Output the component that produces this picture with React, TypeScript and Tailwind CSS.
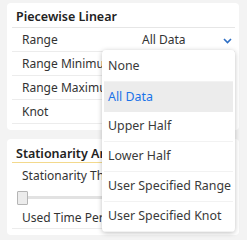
import React from 'react';

const font = { fontFamily: '"Noto Sans", "Open Sans", sans-serif' };

const rows = ['Range', 'Range Minimum', 'Range Maximum', 'Knot'];
const options = ['None', 'All Data', 'Upper Half', 'Lower Half', 'User Specified Range', 'User Specified Knot'];

const App: React.FC = () => {
  return (
    <div
      className="relative w-[247px] h-[240px] overflow-hidden bg-[#f3f3f3] pt-[3px] pl-[7px] pr-[8px] text-[12px] text-[#333]"
      style={font}
    >
      {/* Piecewise Linear */}
      <div className="h-[127px] rounded-[4px] bg-white pl-[5px] pr-[4px]">
        <div className="h-[25px] border-b border-[#e6e6e6] pl-[4px] pt-[5px] text-[12.5px] font-semibold leading-[17px] text-[#222]">
          Piecewise Linear
        </div>
        {rows.map((r, i) => (
          <div key={r} className="flex h-[24px] items-center border-b border-[#ececec] pl-[10px] whitespace-nowrap">
            <span className="flex-1">{r}</span>
            {i === 0 && (
              <div className="flex w-[93px] items-center justify-between pr-[3px]">
                <span>All Data</span>
                <svg width="9" height="6" viewBox="0 0 9 6" className="mt-[2px]">
                  <path d="M1 1 L4.5 4.5 L8 1" fill="none" stroke="#2d6ec4" strokeWidth="1.6" />
                </svg>
              </div>
            )}
          </div>
        ))}
      </div>

      {/* Stationarity Analysis */}
      <div className="mt-[9px] h-[96px] rounded-[4px] bg-white pl-[5px] pr-[4px]">
        <div className="h-[24px] border-b border-[#f3d98c] pl-[4px] pt-[6px] text-[12.5px] font-semibold leading-[17px] text-[#222] whitespace-nowrap">
          Stationarity Analysis
        </div>
        <div className="flex h-[25px] items-center pl-[10px] whitespace-nowrap">Stationarity Threshold</div>
        <div className="flex h-[19px] items-center pl-[5px]">
          <div className="h-[14px] w-[11px] rounded-[1px] border border-[#b5b5b5] bg-[#ececec]" />
          <div className="h-[3px] flex-1 bg-[#e2e2e2]" />
        </div>
        <div className="flex h-[22px] items-center border-b border-[#ececec] pl-[10px] whitespace-nowrap">
          Used Time Period
        </div>
      </div>

      {/* Dropdown menu */}
      <div className="absolute left-[102px] top-[50px] w-[133px] h-[182px] rounded-[4px] bg-white p-[2px] shadow-[0_1px_5px_rgba(0,0,0,0.25)]">
        {options.map((o, i) => (
          <div
            key={o}
            className={
              'flex h-[30px] items-center pl-[4px] text-[12.4px] whitespace-nowrap ' +
              (i === 1 ? 'bg-[#ececec] text-[#1a73e8]' : 'text-[#3a3a3a] border-b border-[#f2f2f2]')
            }
          >
            {o}
          </div>
        ))}
      </div>
    </div>
  );
};

export default App;
